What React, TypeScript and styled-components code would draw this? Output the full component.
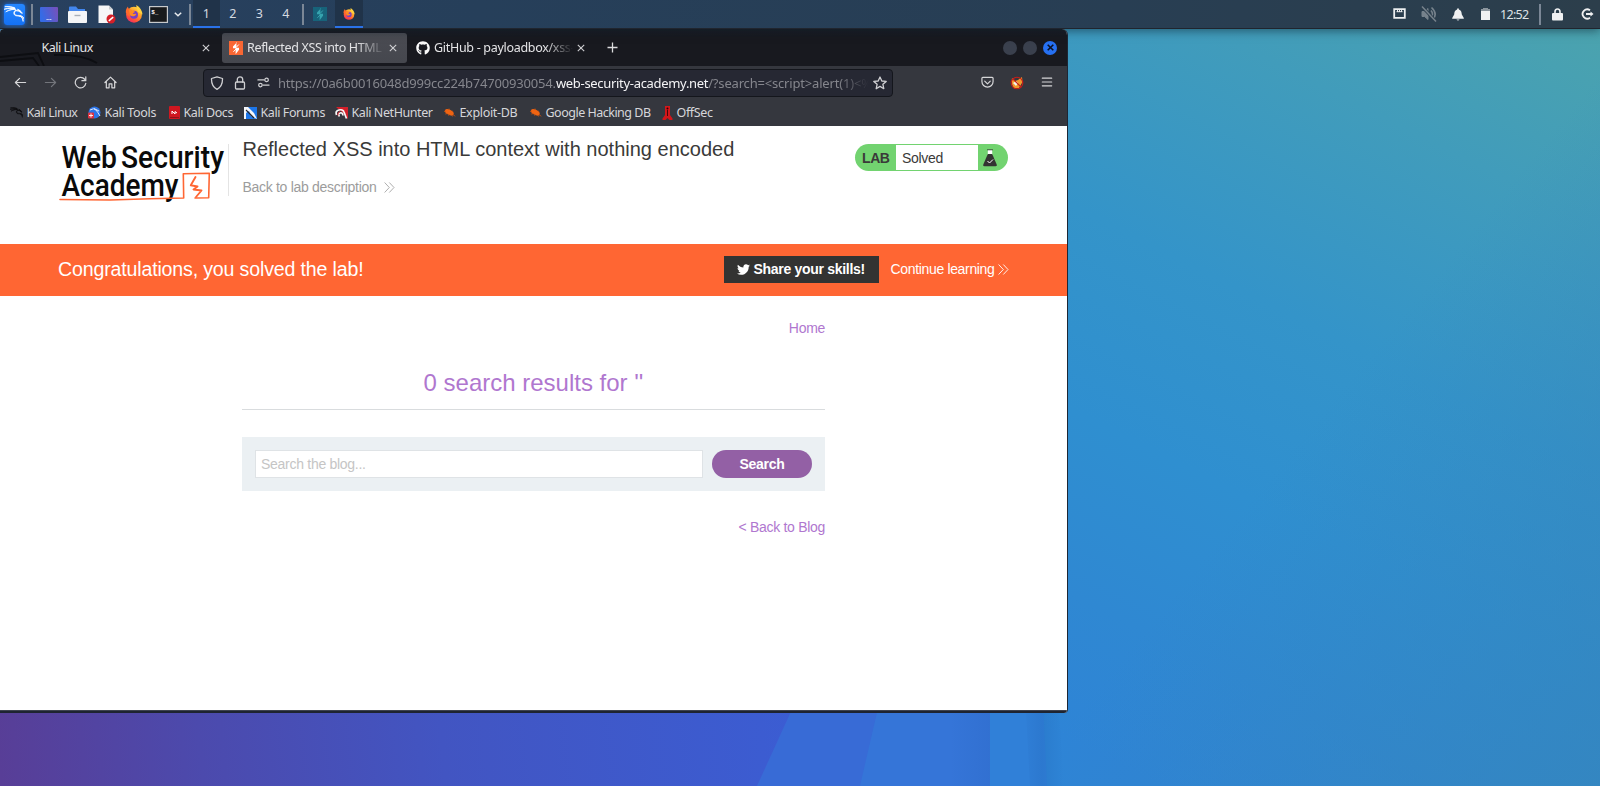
import React from "react";
import styled, { createGlobalStyle } from "styled-components";
import { SiKalilinux } from "react-icons/si";
import { FaGithub, FaTwitter } from "react-icons/fa";

const GlobalStyle = createGlobalStyle`
  * { box-sizing: border-box; }
  html, body { margin: 0; overflow: hidden; }
`;

const ui = `"Noto Sans", "Open Sans", sans-serif`;
const web = `"Liberation Sans", Arial, sans-serif`;

/* ---------- desktop ---------- */

const Desktop = styled.div`
  position: relative;
  width: 1600px;
  height: 786px;
  overflow: hidden;
  background: #2f84d8;
  font-family: ${ui};
`;

const WallpaperSvg = styled.svg`
  position: absolute;
  inset: 0;
  display: block;
`;

const Wallpaper = () => (
  <WallpaperSvg width="1600" height="786" viewBox="0 0 1600 786">
    <defs>
      <linearGradient id="sky" gradientUnits="userSpaceOnUse" x1="1600" y1="30" x2="1210" y2="810">
        <stop offset="0" stopColor="#4ba3ae" />
        <stop offset="0.2" stopColor="#419cbb" />
        <stop offset="0.45" stopColor="#3494c9" />
        <stop offset="0.66" stopColor="#2f8fd0" />
        <stop offset="0.85" stopColor="#2f88d2" />
        <stop offset="1" stopColor="#2e84d6" />
      </linearGradient>
      <linearGradient id="dusk" gradientUnits="userSpaceOnUse" x1="0" y1="770" x2="800" y2="690">
        <stop offset="0" stopColor="#583e97" />
        <stop offset="0.25" stopColor="#4c4aad" />
        <stop offset="0.55" stopColor="#4255c2" />
        <stop offset="1" stopColor="#3b5dd3" />
      </linearGradient>
      <linearGradient id="fold" x1="0" x2="1" y1="0" y2="0">
        <stop offset="0" stopColor="#10408f" stopOpacity="0" />
        <stop offset="1" stopColor="#10408f" stopOpacity="0.09" />
      </linearGradient>
      <linearGradient id="crease" x1="0" x2="1" y1="0" y2="0">
        <stop offset="0" stopColor="#10408f" stopOpacity="0" />
        <stop offset="0.5" stopColor="#10408f" stopOpacity="0.12" />
        <stop offset="1" stopColor="#10408f" stopOpacity="0" />
      </linearGradient>
      <linearGradient id="corner" gradientUnits="userSpaceOnUse" x1="1250" y1="500" x2="1600" y2="786">
        <stop offset="0" stopColor="#3583bd" stopOpacity="0" />
        <stop offset="1" stopColor="#3585bd" stopOpacity="0.8" />
      </linearGradient>
    </defs>
    <rect width="1600" height="786" fill="url(#sky)" />
    <rect x="1060" width="540" height="786" fill="url(#corner)" />
    <path d="M0 600H1038L1047 786H0Z" fill="#3080d8" />
    <path d="M1020 600H1052L1064 786H1030Z" fill="url(#crease)" />
    <rect y="600" width="990" height="186" fill="#3575d8" />
    <rect x="950" y="600" width="40" height="186" fill="url(#fold)" />
    <path d="M0 600H903L860 786H0Z" fill="#386bd6" />
    <path d="M0 600H842L757 786H0Z" fill="url(#dusk)" />
  </WallpaperSvg>
);

/* ---------- top panel ---------- */

const Panel = styled.header`
  position: relative;
  z-index: 1;
  display: flex;
  justify-content: space-between;
  height: 29px;
  background: linear-gradient(90deg, #28405f 0%, #263f5a 30%, #283e53 70%, #2c3e4b 100%);
  border-bottom: 1px solid #20252e;
  box-shadow: 0 2px 9px rgba(10, 25, 40, 0.5);
`;

const PanelGroup = styled.div`
  display: flex;
  align-items: center;
  height: 28px;
`;

const Launcher = styled.span<{ $w: number }>`
  display: flex;
  align-items: center;
  justify-content: center;
  flex: none;
  width: ${(p) => p.$w}px;
  height: 28px;
`;

const KaliTile = styled.span`
  display: flex;
  align-items: center;
  justify-content: center;
  width: 21px;
  height: 21px;
  margin-right: 3px;
  color: #fff;
  background: linear-gradient(#2587ff, #1471f5);
  border-radius: 3px;
  box-shadow: 0 0 4px #1b6fe8;
`;

const PanelRule = styled.i`
  flex: none;
  width: 2px;
  height: 21px;
  background: #7b8796;
`;

const Workspace = styled.span<{ $on?: boolean; $w?: number }>`
  display: flex;
  align-items: center;
  justify-content: center;
  width: ${(p) => p.$w ?? 26.5}px;
  height: 28px;
  padding-bottom: 1px;
  color: #d5dae0;
  font-size: 12.5px;
  background: ${(p) => (p.$on ? "#203349" : "transparent")};
  box-shadow: ${(p) => (p.$on ? "inset 0 -2px #2a72e8" : "none")};
`;

const Clock = styled.span`
  width: 39px;
  color: #dde2e6;
  font-size: 12.5px;
  letter-spacing: -0.7px;
`;

/* ---------- browser ---------- */

const Browser = styled.main`
  position: relative;
  display: flex;
  flex-direction: column;
  width: 1068px;
  height: 684px;
  border-right: 1px solid #1d2735;
  border-radius: 4px 6px 4px 0;
  overflow: hidden;
  background: #fff;
`;

const BrowserShade = styled.div`
  width: 1068px;
  border-radius: 4px 6px 4px 0;
  box-shadow: 0 3px 9px rgba(8, 16, 40, 0.6);
`;

const TabStrip = styled.div`
  position: relative;
  display: flex;
  align-items: center;
  flex: none;
  height: 37px;
  padding-left: 4px;
  background: linear-gradient(#1b1e25, #18191f 20%, #18191f);
`;

const StripArt = styled.svg`
  position: absolute;
  left: 0;
  bottom: 0;
`;

const Tab = styled.div<{ $w: number; $on?: boolean; $pad: number; $end?: number }>`
  position: relative;
  display: flex;
  align-items: center;
  gap: 4px;
  width: ${(p) => p.$w}px;
  height: 30px;
  padding: 0 ${(p) => p.$end ?? 10}px 0 ${(p) => p.$pad}px;
  border-radius: 3px;
  background: ${(p) => (p.$on ? "linear-gradient(#4b4c53, #45474e)" : "transparent")};
  svg { flex: none; }
`;

const TabTitle = styled.span<{ $fade?: boolean; $ls?: number }>`
  flex: 1;
  overflow: hidden;
  white-space: nowrap;
  color: #e4e4e6;
  font-size: 12.5px;
  letter-spacing: ${(p) => p.$ls ?? -0.48}px;
  mask-image: ${(p) => (p.$fade ? "linear-gradient(90deg, #000 calc(100% - 28px), transparent)" : "none")};
`;

const WindowDots = styled.div`
  display: flex;
  gap: 6px;
  margin-left: auto;
  padding-right: 10px;
`;

const Dot = styled.span<{ $close?: boolean }>`
  display: flex;
  align-items: center;
  justify-content: center;
  width: 14px;
  height: 14px;
  border-radius: 50%;
  background: ${(p) => (p.$close ? "#2670f2" : "#3a404d")};
`;

const NavBar = styled.div`
  display: flex;
  align-items: center;
  flex: none;
  height: 33px;
  background: #35373e;
`;

const NavButtons = styled.div`
  display: flex;
  width: 203px;
  padding-left: 5px;
`;

const NavButton = styled.span<{ $dim?: boolean }>`
  display: flex;
  justify-content: center;
  width: 30px;
  color: ${(p) => (p.$dim ? "#73757b" : "#d6d6d8")};
`;

const UrlBar = styled.div`
  display: flex;
  align-items: center;
  width: 690px;
  height: 28px;
  padding-left: 1px;
  background: #262833;
  border: 1px solid #14161c;
  border-radius: 4px;
`;

const UrlIcon = styled.span`
  display: flex;
  justify-content: center;
  flex: none;
  width: 23.3px;
  color: #cfcfd2;
`;

const UrlText = styled.span`
  flex: 1;
  margin-left: 3px;
  overflow: hidden;
  white-space: nowrap;
  color: #85868d;
  font-size: 13px;
  letter-spacing: -0.18px;
  mask-image: linear-gradient(90deg, #000 calc(100% - 32px), transparent);
`;

const UrlHost = styled.b`
  color: #f4f4f6;
  font-weight: 400;
  letter-spacing: -0.31px;
`;

const ToolIcons = styled.div`
  display: flex;
  margin-left: auto;
  padding-right: 5px;
`;

const Bookmarks = styled.nav`
  display: flex;
  align-items: center;
  flex: none;
  height: 27px;
  padding-left: 10px;
  background: #35373e;
`;

const Bookmark = styled.span<{ $w: number; $ls?: number }>`
  display: flex;
  align-items: center;
  gap: 3.5px;
  flex: none;
  width: ${(p) => p.$w}px;
  padding-bottom: 1px;
  white-space: nowrap;
  color: #d6d6da;
  font-size: 12.5px;
  letter-spacing: ${(p) => p.$ls ?? -0.5}px;
  svg { flex: none; margin-top: 1px; }
`;

/* ---------- page ---------- */

const Page = styled.section`
  flex: 1;
  background: #fff;
  font-family: ${web};
  font-size: 14px;
  letter-spacing: -0.3px;
`;

const BottomFrame = styled.div`
  flex: none;
  height: 3px;
  background: linear-gradient(#3d424f 0 33%, #1e2431 33%);
`;

const LabHeader = styled.div`
  display: flex;
  height: 118px;
  padding: 0 59px 0 58px;
`;

const LogoBox = styled.div`
  width: 171px;
  height: 52px;
  margin-top: 18px;
  border-right: 1px solid #e4e4e4;
  letter-spacing: 0;
  svg { display: block; overflow: visible; }
`;

const LabIntro = styled.div`
  flex: 1;
  padding: 11px 0 0 13.5px;
`;

const LabTitle = styled.h2`
  margin: 0;
  color: #3a3a39;
  font-size: 20px;
  font-weight: 400;
  letter-spacing: 0;
  line-height: 24px;
`;

const LabBack = styled.a`
  display: flex;
  align-items: center;
  gap: 8px;
  margin-top: 18px;
  color: #9c9c9c;
  line-height: 16px;
`;

const StatusPill = styled.div`
  display: flex;
  align-items: stretch;
  width: 153px;
  height: 27px;
  margin-top: 18px;
  padding: 1px 0;
  overflow: hidden;
  border-radius: 14px;
  background: #72d370;
  color: #3a3a39;
  line-height: 26px;
`;

const PillTag = styled.b`
  width: 41px;
  padding-left: 7px;
  font-size: 14px;
  letter-spacing: -0.4px;
  line-height: 27px;
`;

const PillState = styled.span`
  width: 82px;
  padding-left: 6px;
  background: #fff;
`;

const PillFlask = styled.span`
  display: flex;
  align-items: center;
  padding-left: 5px;
`;

const Banner = styled.div`
  display: flex;
  align-items: center;
  height: 52px;
  padding: 0 58px 2px 58px;
  background: #ff6633;
  color: #fff;
`;

const BannerText = styled.p`
  flex: 1;
  margin: 0;
  padding-top: 1px;
  font-size: 19.6px;
  letter-spacing: -0.17px;
`;

const ShareButton = styled.button`
  display: flex;
  align-items: center;
  gap: 4px;
  width: 155px;
  height: 27px;
  padding: 0 0 0 13px;
  border: 0;
  background: #333332;
  color: #fff;
  font: 700 14px ${web};
  letter-spacing: -0.3px;
`;

const ContinueLink = styled.a`
  display: flex;
  align-items: center;
  gap: 3.5px;
  margin-left: 12px;
  letter-spacing: -0.34px;
`;

const Blog = styled.div`
  width: 583px;
  margin-left: 242px;
`;

const BlogLink = styled.a<{ $top: number }>`
  display: block;
  padding-top: ${(p) => p.$top}px;
  color: #b077cf;
  line-height: 15px;
  text-align: right;
`;

const Results = styled.h1`
  margin: 32px 0 0;
  padding-bottom: 11px;
  border-bottom: 1px solid #d9dcde;
  color: #b077cf;
  font-size: 24px;
  font-weight: 400;
  letter-spacing: 0;
  line-height: 30px;
  text-align: center;
`;

const SearchBox = styled.form`
  display: flex;
  justify-content: space-between;
  height: 54px;
  margin-top: 27px;
  padding: 13px 13px;
  background: #ebf0f3;
`;

const SearchInput = styled.input`
  width: 448px;
  height: 28px;
  padding: 0 5px;
  border: 1px solid #dfe3e6;
  background: #fff;
  font: 14px ${web};
  letter-spacing: -0.28px;
  &::placeholder { color: #c5c5c5; opacity: 1; }
`;

const SearchButton = styled.button`
  width: 100px;
  height: 28px;
  padding: 0;
  border: 0;
  border-radius: 14px;
  background: #9360a5;
  color: #fff;
  font: 700 14px ${web};
  letter-spacing: -0.3px;
`;

/* ---------- drawings ---------- */

const Firefox = ({ size }: { size: number }) => (
  <svg width={size} height={size} viewBox="0 0 24 24">
    <defs>
      <linearGradient id="fx" x1="0.85" y1="0" x2="0.2" y2="1">
        <stop offset="0" stopColor="#ffe14a" />
        <stop offset="0.4" stopColor="#ff9a26" />
        <stop offset="0.75" stopColor="#ff4d3c" />
        <stop offset="1" stopColor="#e5266f" />
      </linearGradient>
    </defs>
    <circle cx="12" cy="13" r="10.6" fill="url(#fx)" />
    <path d="M15 0c4 2 8 7 8.300 12.500L17 9c0-3-2-5-2-9Z" fill="#ffd23e" />
    <path d="M1 10C1 6 2 4 4 2c0 2 1 3 2 3.500L9 7l-4 8Z" fill="#ff6a2b" />
    <circle cx="12" cy="13" r="5.300" fill="#7440c8" />
    <path d="M5 7c2-1 4-.5 5 .8 1.500.2 3 .2 3 1.200s-2 1.500-2.500 2.500c1 .8 3.500 0 4.500.5-1 3-5 4-8 2Z" fill="#ff8a22" />
  </svg>
);

const BurpMark = ({ size, bg, fg }: { size: number; bg: string; fg: string }) => (
  <svg width={size} height={size} viewBox="0 0 14 14">
    <rect width="14" height="14" fill={bg} />
    <path d="M8.200 1 4 5.400v1.900h3.400V1Z" fill={fg} />
    <path d="M6.600 13.200 10 8.700V6.800H6.600Z" fill={fg} />
    <path d="M7.400 6.200 9.800 3.500M4.400 10.800 7 8" stroke={fg} strokeWidth="1" />
  </svg>
);

const Cross = ({ size = 8, color = "#d0d0d3", w = 1.1 }: { size?: number; color?: string; w?: number }) => (
  <svg width={size} height={size} viewBox="0 0 8 8">
    <path d="M.8.8l6.400 6.400M7.200.8.8 7.200" stroke={color} strokeWidth={w} />
  </svg>
);

const Chevrons = ({ color }: { color: string }) => (
  <svg width="11" height="11" viewBox="0 0 11 11" fill="none" stroke={color} strokeWidth="0.9">
    <path d="M.6.5 5.300 5.500.6 10.500M5.300.5 10 5.500 5.300 10.500" />
  </svg>
);

const Line = ({ d, size = 14, children }: { d?: string; size?: number; children?: React.ReactNode }) => (
  <svg width={size} height={size} viewBox="0 0 14 14" fill="none" stroke="currentColor" strokeWidth="1.300" strokeLinecap="round" strokeLinejoin="round">
    {d && <path d={d} />}
    {children}
  </svg>
);

const Bug = () => (
  <svg width="13" height="13" viewBox="0 0 13 13">
    <ellipse cx="6.300" cy="6.300" rx="4.800" ry="2.600" transform="rotate(28 6.300 6.300)" fill="#ef6412" />
    <path d="M1 5.500 3 5M2.200 8 4.500 7.500M5.500 9.800 6.500 8.500M6 2.500 6.500 4M9.500 10.500l.5-1.500M10 8.500l2.300 1.800M9 4.500l1 1.500" stroke="#c9520f" strokeWidth=".8" />
  </svg>
);

const AcademyLogo = () => (
  <svg width="170" height="60" viewBox="58 144 170 60">
    <g fill="#0a0a0a" fontFamily="Roboto, sans-serif" fontWeight="500" fontSize="30.500">
      <text x="61.500" y="168" textLength="55.500" lengthAdjust="spacingAndGlyphs">Web</text>
      <text x="121" y="168" textLength="103" lengthAdjust="spacingAndGlyphs">Security</text>
      <text x="61.500" y="195.500" textLength="117" lengthAdjust="spacingAndGlyphs">Academy</text>
    </g>
    <g fill="none" stroke="#ff6633" strokeLinejoin="round" strokeLinecap="round">
      <path d="M60 199.500 110 200 150 198.800l33.700-.8-.4-24.300 26-.4-.6 24.400-13.700.3" strokeWidth="1.600" />
      <path d="M195.500 177 190.800 185.300l6.700 1.200-4 3 8 1-5.500 6.500" strokeWidth="1.900" />
    </g>
  </svg>
);

/* ---------- app ---------- */

export default function App() {
  return (
    <Desktop>
      <GlobalStyle />
      <Wallpaper />
      <Panel>
        <PanelGroup>
          <Launcher $w={31}>
            <KaliTile><SiKalilinux size={20} stroke="currentColor" strokeWidth={0.9} /></KaliTile>
          </Launcher>
          <PanelRule />
          <Launcher $w={32}>
            <svg width="18" height="15" viewBox="0 0 18 15">
              <defs>
                <linearGradient id="desk" x1="0" y1="0.3" x2="1" y2="0">
                  <stop offset="0" stopColor="#356be6" />
                  <stop offset="1" stopColor="#7a4fb8" />
                </linearGradient>
              </defs>
              <rect width="18" height="15" rx="1" fill="url(#desk)" />
              <path d="M6.500 12.500h5" stroke="#d5d8f5" strokeWidth="1" strokeDasharray="1.300 .5" />
            </svg>
          </Launcher>
          <Launcher $w={25}>
            <svg width="19" height="17" viewBox="0 0 19 17">
              <path d="M1 1.500Q1 .5 2 .5h6l2 2.500h7v5H1Z" fill="#4286ee" />
              <rect y="5" width="19" height="12" rx="1" fill="#f4f5f7" />
              <path d="M6.500 9.500h6" stroke="#a9afb8" strokeWidth="1.400" />
            </svg>
          </Launcher>
          <Launcher $w={34}>
            <svg width="18" height="19" viewBox="0 0 18 19">
              <path d="M.5.5h10.500l4 4V18H.5Z" fill="#f6f6f7" />
              <path d="M11 .5v4h4Z" fill="#c9ccd0" />
              <circle cx="13" cy="14" r="4.500" fill="#d51f28" />
              <path d="m10.800 15.800 4.400-3.600" stroke="#fff" strokeWidth="1.500" />
            </svg>
          </Launcher>
          <Launcher $w={20}><Firefox size={18} /></Launcher>
          <Launcher $w={29}>
            <svg width="19" height="17" viewBox="0 0 19 17">
              <rect x=".6" y=".6" width="17.800" height="15.800" fill="#181a1c" stroke="#c6c9cc" strokeWidth="1.200" />
              <text x="2.200" y="7.500" fill="#fff" fontFamily="Liberation Mono, monospace" fontWeight="700" fontSize="6">$_</text>
            </svg>
          </Launcher>
          <Launcher $w={10}>
            <svg width="8" height="5" viewBox="0 0 8 5" fill="none" stroke="#e8ebee" strokeWidth="1.500"><path d="m.8.800 3.200 3 3.200-3" /></svg>
          </Launcher>
          <Launcher $w={6} />
          <PanelRule />
          <Launcher $w={2} />
          <Workspace $on>1</Workspace>
          <Workspace>2</Workspace>
          <Workspace>3</Workspace>
          <Workspace>4</Workspace>
          <Launcher $w={3} />
          <PanelRule />
          <Launcher $w={31}><BurpMark size={14} bg="#17637a" fg="#36a3ae" /></Launcher>
          <Workspace $on $w={28}><Firefox size={12} /></Workspace>
        </PanelGroup>
        <PanelGroup>
          <Launcher $w={30}>
            <svg width="13" height="12" viewBox="0 0 13 12" fill="none" stroke="#eceef0">
              <path d="M1.200 1.200h10.600v8.600H1.200Z" strokeWidth="1.800" />
              <path d="M4.500 1.500v2.500M6.500 1.500v2.500M8.500 1.500v2.500M3.500 3.700h6" strokeWidth="1" />
            </svg>
          </Launcher>
          <Launcher $w={30}>
            <svg width="16" height="16" viewBox="0 0 16 16" fill="none" stroke="#76828c">
              <path d="M1 5.500h2.500L7 2.500v11L3.500 10.500H1Z" fill="#76828c" />
              <path d="M10 4.500q3 3.500 0 7M10.500 1.500q6.500 6 1.500 12" strokeWidth="1.600" />
              <path d="m1 .500 14 15" stroke="#2b3d4c" strokeWidth="3" /><path d="m1 .500 14 15" strokeWidth="1.500" />
            </svg>
          </Launcher>
          <Launcher $w={27}>
            <svg width="12" height="13" viewBox="0 0 12 13" fill="#f0f1f2">
              <path d="M6 .3q.9 0 .9 1.200C9 2 9.700 4 9.800 6.500L11.800 10v.8H.2V10L2.200 6.500C2.300 4 3 2 5.100 1.500 5.100.3 6 .3 6 .3ZM4.400 11.500h3.200q-1.600 2-3.200 0Z" />
            </svg>
          </Launcher>
          <Launcher $w={29}>
            <svg width="9" height="12" viewBox="0 0 9 12">
              <path d="M2 0h5v1h2v3H0V1h2Z" fill="#8c969e" /><path d="M0 3h9v9H0Z" fill="#f0f1f2" />
            </svg>
          </Launcher>
          <Clock>12:52</Clock>
          <PanelRule />
          <Launcher $w={33}>
            <svg width="11" height="13" viewBox="0 0 11 13"><path d="M3 6V3.700Q3 1 5.500 1T8 3.700V6" fill="none" stroke="#f0f1f2" strokeWidth="1.600" /><rect y="5" width="11" height="7.500" rx="1" fill="#f0f1f2" /></svg>
          </Launcher>
          <Launcher $w={26}>
            <svg width="13" height="12" viewBox="0 0 13 12" fill="none" stroke="#f0f1f2" strokeWidth="1.800"><path d="M9 2.300A4.600 4.600 0 1 0 9 9.700M5 6h6" /><path d="M9.500 3.500 12.500 6l-3 2.500Z" fill="#f0f1f2" stroke="none" /></svg>
          </Launcher>
        </PanelGroup>
      </Panel>

      <BrowserShade>
        <Browser>
          <TabStrip>
            <StripArt width="110" height="14" viewBox="0 0 110 14" fill="none" stroke="#0d0e12" strokeWidth="1.800">
              <path d="M0 5 38 1l6 13M0 9l33-3 6 8M54 3q28-1 43 8" />
            </StripArt>
            <Tab $w={218} $pad={37.5} $end={12}>
              <TabTitle>Kali Linux</TabTitle>
              <Cross />
            </Tab>
            <Tab $w={185} $on $pad={7}>
              <BurpMark size={14} bg="#fa6733" fg="#fff" />
              <TabTitle $fade $ls={-0.35}>Reflected XSS into HTML context</TabTitle>
              <Cross />
            </Tab>
            <Tab $w={188} $pad={9}>
              <FaGithub size={14} color="#fafafa" />
              <TabTitle $fade $ls={-0.3}>GitHub - payloadbox/xss-payload</TabTitle>
              <Cross />
            </Tab>
            <Launcher $w={34}>
              <svg width="11" height="11" viewBox="0 0 11 11"><path d="M5.500.5v10M.5 5.500h10" stroke="#dcdcde" strokeWidth="1.300" /></svg>
            </Launcher>
            <WindowDots>
              <Dot />
              <Dot />
              <Dot $close><Cross size={7} color="#0b1020" w={1.8} /></Dot>
            </WindowDots>
          </TabStrip>

          <NavBar>
            <NavButtons>
              <NavButton><Line size={13} d="M12.500 7h-11M6 2.500 1.500 7 6 11.500" /></NavButton>
              <NavButton $dim><Line size={13} d="M1.500 7h11M8 2.500 12.500 7 8 11.500" /></NavButton>
              <NavButton><Line size={13} d="M12.700 8A5.700 5.700 0 1 1 11.500 3.500M12.700.8V5H8.500" /></NavButton>
              <NavButton><Line size={13} d="M1 7 7 1.200 13 7M2.500 6v6.700h3V8.500h3v4.200h3V6" /></NavButton>
            </NavButtons>
            <UrlBar>
              <UrlIcon><Line d="M7 .8 12.500 2.500C12.700 8 10.500 11.500 7 13.300 3.500 11.500 1.300 8 1.500 2.500Z" /></UrlIcon>
              <UrlIcon><Line d="M4.300 6V3.500a2.700 2.700 0 0 1 5.400 0V6"><rect x="2.500" y="6" width="9" height="7" rx="1" /></Line></UrlIcon>
              <UrlIcon><Line size={13} d="M7.500 4.200H1M6.500 9.800H13"><circle cx="10.300" cy="4.200" r="1.900" /><circle cx="3.700" cy="9.800" r="1.900" /></Line></UrlIcon>
              <UrlText>
                https://0a6b0016048d999cc224b74700930054.<UrlHost>web-security-academy.net</UrlHost>/?search=&lt;script&gt;alert(1)&lt;%2Fscript&gt;
              </UrlText>
              <UrlIcon><Line d="M7 1 8.800 5 13.200 5.400 9.900 8.300 10.800 12.700 7 10.400 3.200 12.700 4.100 8.300.8 5.400 5.200 5Z" /></UrlIcon>
            </UrlBar>
            <ToolIcons>
              <NavButton><Line size={13} d="M2 1.500h10q1 0 1 1V6a6 6 0 0 1-12 0V2.500q0-1 1-1ZM4 5.500l3 3 3-3" /></NavButton>
              <NavButton>
                <svg width="14" height="14" viewBox="0 0 14 14">
                  <path d="M2 2l3 3 3-1 4-3 .5 5L9 12l-5 .5Q1 9 2 2Z" fill="#f09a2c" />
                  <path d="M3 7l3-2 2 2-2 3Z" fill="#f7f3ea" />
                  <circle cx="7" cy="7" r="5.800" fill="none" stroke="#c81e18" strokeWidth="1.100" />
                  <path d="m3 3 8 8" stroke="#c81e18" strokeWidth="1.200" />
                </svg>
              </NavButton>
              <NavButton><Line size={12} d="M1.500 2.500h11M1.500 7h11M1.500 11.500h11" /></NavButton>
            </ToolIcons>
          </NavBar>

          <Bookmarks>
            <Bookmark $w={78} $ls={-0.54}><SiKalilinux size={13} color="#121316" stroke="#121316" strokeWidth={1.3} />Kali Linux</Bookmark>
            <Bookmark $w={81} $ls={-0.33}>
              <svg width="13" height="13" viewBox="0 0 13 13"><circle cx="6.500" cy="6.500" r="6" fill="#2b74e8" /><path d="M2 4q4-2.500 6 0t4 6M6 2.500l5 2.500" stroke="#dfe9fb" fill="none" /><rect y="6.500" width="6" height="6" rx="1" fill="#dd3340" /><path d="M3 7.500v4M1 9.500h4" stroke="#fff" strokeWidth=".9" /></svg>
              Kali Tools
            </Bookmark>
            <Bookmark $w={75} $ls={-0.4}>
              <svg width="11" height="13" viewBox="0 0 11 13"><rect width="11" height="13" rx="1" fill="#cf1720" /><path d="M3 8V5l3 3V5.500L8 7" stroke="#fff" fill="none" /><path d="M1 11.500h9" stroke="#8f1219" /></svg>
              Kali Docs
            </Bookmark>
            <Bookmark $w={91} $ls={-0.42}>
              <svg width="13" height="12" viewBox="0 0 13 12"><rect width="13" height="12" fill="#1d76e8" /><path d="M0 0h4l6 6 3 6-6-3-2-5-3 2v6H0Z" fill="#f5f7fa" /><path d="m2 3 8 8" stroke="#20242c" strokeWidth="1.100" /></svg>
              Kali Forums
            </Bookmark>
            <Bookmark $w={108} $ls={-0.42}>
              <svg width="13" height="12" viewBox="0 0 13 12"><path d="M1 0h12v12L8 6Z" fill="#d3202a" /><path d="M1.500 8q-1.500-4 2.500-5t5 2l2.500 6.500M4.500 9.500q-2-2.500.5-3.500T8 8.500" fill="none" stroke="#f6f6f6" strokeWidth="1.700" /><path d="M3 8.500q-1-3 2-4" fill="none" stroke="#d3202a" /></svg>
              Kali NetHunter
            </Bookmark>
            <Bookmark $w={86} $ls={-0.33}><Bug />Exploit-DB</Bookmark>
            <Bookmark $w={133}><Bug />Google Hacking DB</Bookmark>
            <Bookmark $w={70} $ls={-0.35}>
              <svg width="11" height="14" viewBox="0 0 11 14"><path d="M3 0h5v9l2.500 3.500V14H7.500l-2-2-2 2H.5v-1.500L3 9Z" fill="#d3161a" /><path d="M5.500 4v6" stroke="#4b0508" strokeWidth="1" /><circle cx="5.500" cy="2.500" r="1" fill="#2a0305" /></svg>
              OffSec
            </Bookmark>
          </Bookmarks>

          <Page>
            <LabHeader>
              <LogoBox><AcademyLogo /></LogoBox>
              <LabIntro>
                <LabTitle>Reflected XSS into HTML context with nothing encoded</LabTitle>
                <LabBack>Back to lab description <Chevrons color="#a5a5a5" /></LabBack>
              </LabIntro>
              <StatusPill>
                <PillTag>LAB</PillTag>
                <PillState>Solved</PillState>
                <PillFlask>
                  <svg width="14" height="18" viewBox="0 0 14 18">
                    <path d="M4.800 1h4.400v5.500H4.800Z" fill="#fff" />
                    <path d="M4 .8h6" stroke="#333332" strokeWidth=".8" />
                    <path d="M4.800 5h4.400l4.500 10.500q.6 1.700-1.200 1.700h-11q-1.800 0-1.200-1.700Z" fill="#333332" />
                    <path d="m4.500 12 2 2 3.500-3.500" fill="none" stroke="#fff" />
                  </svg>
                </PillFlask>
              </StatusPill>
            </LabHeader>
            <Banner>
              <BannerText>Congratulations, you solved the lab!</BannerText>
              <ShareButton><FaTwitter size={13} />Share your skills!</ShareButton>
              <ContinueLink>Continue learning <Chevrons color="#fff" /></ContinueLink>
            </Banner>
            <Blog>
              <BlogLink $top={25}>Home</BlogLink>
              <Results>0 search results for ''</Results>
              <SearchBox>
                <SearchInput placeholder="Search the blog..." />
                <SearchButton type="button">Search</SearchButton>
              </SearchBox>
              <BlogLink $top={29}>&lt; Back to Blog</BlogLink>
            </Blog>
          </Page>
          <BottomFrame />
        </Browser>
      </BrowserShade>
    </Desktop>
  );
}
